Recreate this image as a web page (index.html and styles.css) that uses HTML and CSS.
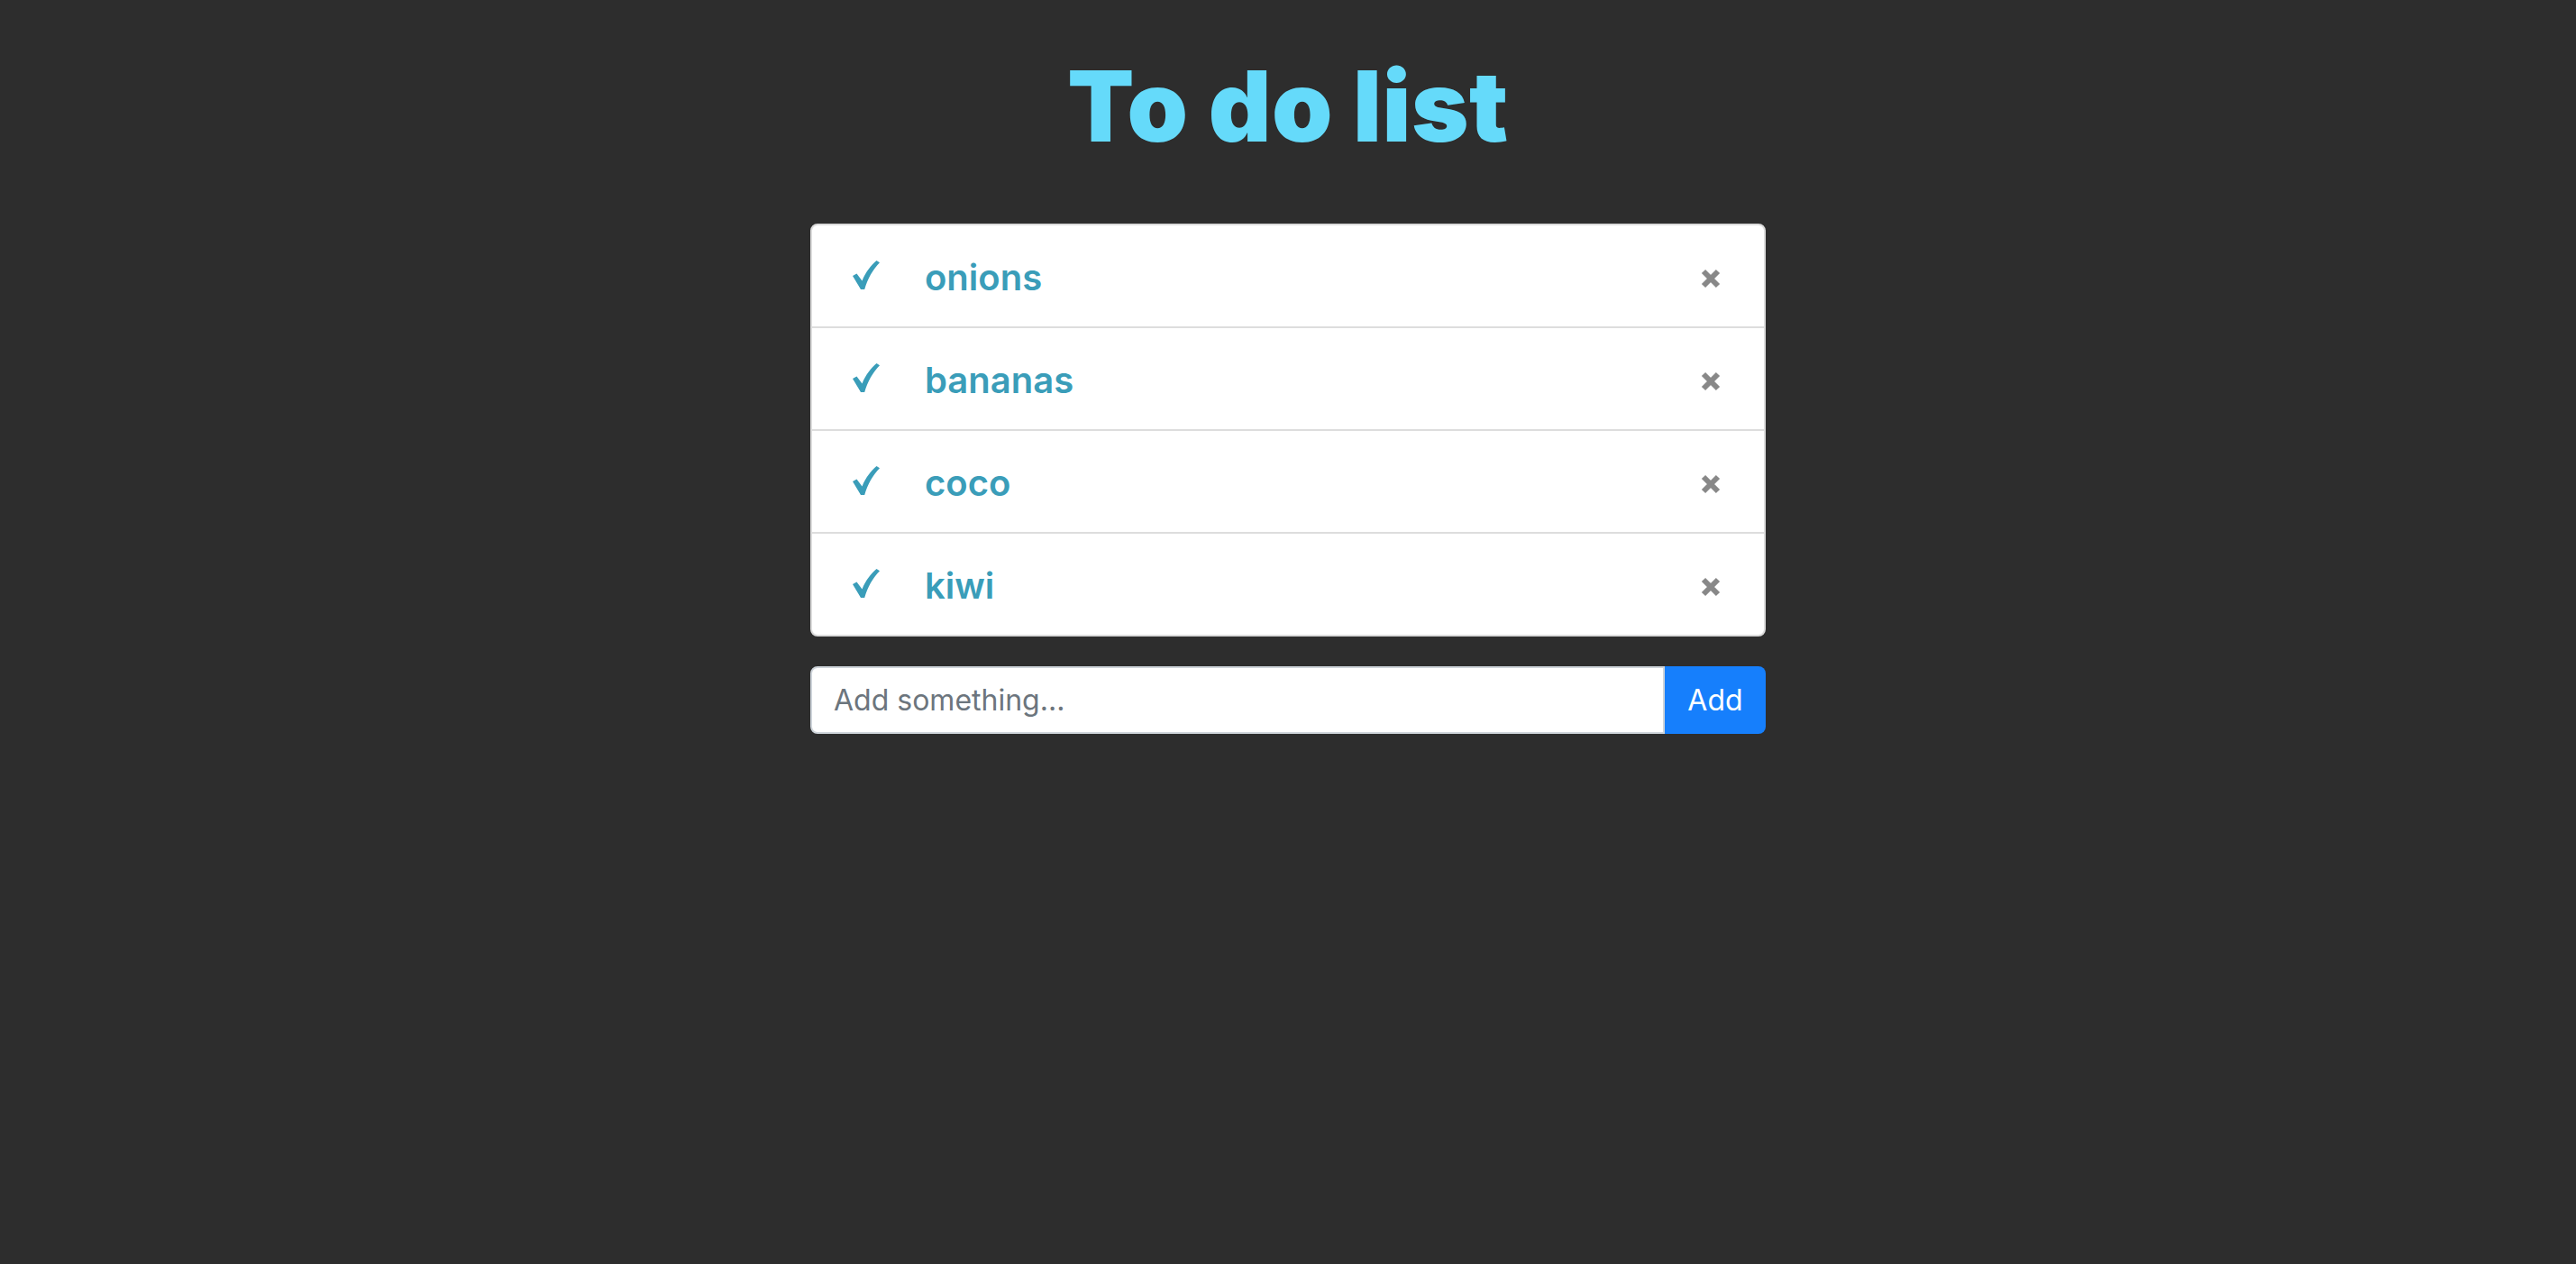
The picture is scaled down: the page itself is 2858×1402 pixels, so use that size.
FILE: index.html
```html
<!DOCTYPE html>
<html lang="en">
<head>
<meta charset="utf-8">
<title>To do list</title>
<link rel="stylesheet" href="styles.css">
</head>
<body>
<main class="app">
  <h1 class="title">To do list</h1>
  <ul class="todo-list">
    <li class="todo-item">
      <svg class="check" viewBox="0 0 30 32" width="30" height="32"><path d="M0,17 L4.5,14.5 L10.5,22.5 C14.5,12.5 20.5,5 26.5,0 L30,2.2 C22.5,10 16.5,20 13.2,32 L9,32 Z"/></svg>
      <span class="todo-text">onions</span>
      <svg class="remove" viewBox="0 0 22 22" width="22" height="22"><path d="M3,3 L19,19 M19,3 L3,19"/></svg>
    </li>
    <li class="todo-item">
      <svg class="check" viewBox="0 0 30 32" width="30" height="32"><path d="M0,17 L4.5,14.5 L10.5,22.5 C14.5,12.5 20.5,5 26.5,0 L30,2.2 C22.5,10 16.5,20 13.2,32 L9,32 Z"/></svg>
      <span class="todo-text">bananas</span>
      <svg class="remove" viewBox="0 0 22 22" width="22" height="22"><path d="M3,3 L19,19 M19,3 L3,19"/></svg>
    </li>
    <li class="todo-item">
      <svg class="check" viewBox="0 0 30 32" width="30" height="32"><path d="M0,17 L4.5,14.5 L10.5,22.5 C14.5,12.5 20.5,5 26.5,0 L30,2.2 C22.5,10 16.5,20 13.2,32 L9,32 Z"/></svg>
      <span class="todo-text">coco</span>
      <svg class="remove" viewBox="0 0 22 22" width="22" height="22"><path d="M3,3 L19,19 M19,3 L3,19"/></svg>
    </li>
    <li class="todo-item">
      <svg class="check" viewBox="0 0 30 32" width="30" height="32"><path d="M0,17 L4.5,14.5 L10.5,22.5 C14.5,12.5 20.5,5 26.5,0 L30,2.2 C22.5,10 16.5,20 13.2,32 L9,32 Z"/></svg>
      <span class="todo-text">kiwi</span>
      <svg class="remove" viewBox="0 0 22 22" width="22" height="22"><path d="M3,3 L19,19 M19,3 L3,19"/></svg>
    </li>
  </ul>
  <form class="add-form">
    <input class="add-input" type="text" placeholder="Add something...">
    <button class="add-button" type="button">Add</button>
  </form>
</main>
</body>
</html>
```
FILE: styles.css
```css
html, body {
  margin: 0;
  padding: 0;
  background: #2d2d2d;
}

body {
  font-family: "Inter", "Noto Sans", sans-serif;
  padding-top: 64px;
}

.app {
  width: 1060px;
  margin: 0 auto;
  display: flex;
  flex-direction: column;
}

.title {
  margin: 0 0 76px;
  font-size: 108px;
  line-height: 1;
  font-weight: 900;
  letter-spacing: 0.005em;
  color: #65dafa;
  text-align: center;
}

.todo-list {
  list-style: none;
  margin: 0;
  padding: 0;
  background: #fff;
  border: 2px solid #dcdcdc;
  border-radius: 8px;
  overflow: hidden;
}

.todo-item {
  display: flex;
  align-items: center;
  height: 112px;
  padding: 0 48px 0 45px;
  border-top: 2px solid #dddddd;
}

.todo-item:first-child {
  border-top: none;
}

.check {
  fill: #3a9db9;
  flex: none;
  margin-top: -2px;
}

.todo-text {
  margin-left: 50px;
  margin-top: 4px;
  flex: 1;
  font-size: 40px;
  font-weight: 600;
  color: #3a9db9;
  line-height: 1;
}

.remove {
  flex: none;
  stroke: #888888;
  stroke-width: 6;
  fill: none;
  margin-top: 5px;
}

.add-form {
  display: flex;
  margin-top: 33px;
  height: 75px;
}

.add-input {
  flex: 1;
  min-width: 0;
  box-sizing: border-box;
  height: 75px;
  margin: 0;
  padding: 0 24px;
  border: 2px solid #ced4da;
  border-radius: 8px 0 0 8px;
  background: #fff;
  font-family: "Inter", "Noto Sans", sans-serif;
  font-size: 32px;
  color: #495057;
  outline: none;
}

.add-input::placeholder {
  color: #6c757d;
  opacity: 1;
}

.add-button {
  flex: none;
  width: 112px;
  height: 75px;
  margin: 0;
  border: none;
  border-radius: 0 8px 8px 0;
  background: #167ffc;
  color: #fff;
  font-family: "Inter", "Noto Sans", sans-serif;
  font-size: 32px;
  font-weight: 400;
  padding: 0;
}
```
